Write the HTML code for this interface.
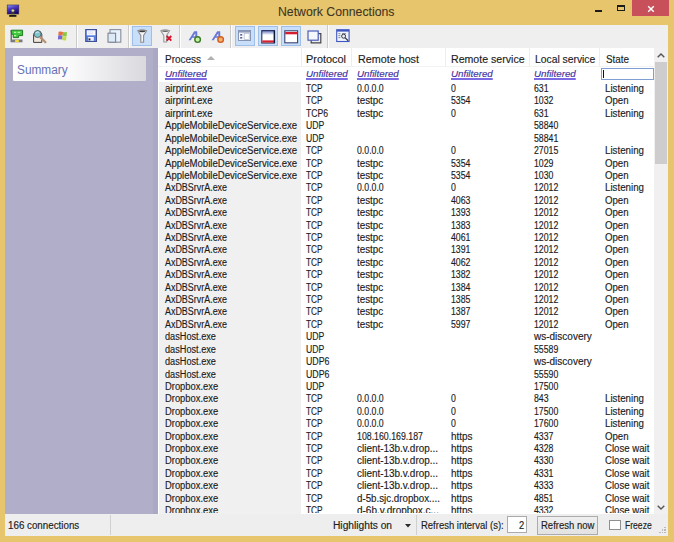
<!DOCTYPE html>
<html><head><meta charset="utf-8"><title>Network Connections</title><style>
*{margin:0;padding:0;box-sizing:border-box}
html,body{width:674px;height:542px;overflow:hidden;background:#E6C56C;font-family:"Liberation Sans",sans-serif;}
.a{position:absolute}
.t{position:absolute;white-space:nowrap;transform-origin:0 0;line-height:1;-webkit-text-stroke:0.15px currentColor}
.sep{position:absolute;top:24.5px;width:1px;height:23.5px;background:#CBCBCB;box-shadow:1px 0 0 #FDFDFD}
.btn{position:absolute;top:26px;width:20px;height:20px;background:#C9DEF8;border:1px solid #9DBFEA}
.ul{text-decoration:underline;text-decoration-thickness:1.7px;text-underline-offset:1.2px;text-decoration-color:#7C6AE4}
</style></head>
<body>
<svg class="a" style="left:6px;top:4px" width="14" height="14" viewBox="0 0 14 14">
<defs><linearGradient id="mon" x1="0" y1="0" x2="0.4" y2="1"><stop offset="0" stop-color="#9aa4ec"/><stop offset="0.45" stop-color="#4a38c4"/><stop offset="1" stop-color="#1c0868"/></linearGradient></defs>
<rect x="1.2" y="1" width="11.6" height="9" fill="url(#mon)" stroke="#2a2460" stroke-width="0.6"/>
<path d="M5 10.2Q5.2 7.6 6.9 7.4Q8.6 7.6 8.8 10.2Z" fill="#3a3a30"/>
<circle cx="6.9" cy="6.6" r="1.5" fill="#e2e89a" stroke="#4a4a3a" stroke-width="0.5"/>
<rect x="3.2" y="11" width="7.2" height="1.8" fill="#1a1a12"/>
</svg>
<div class="t " style="left:278.30px;top:5.40px;font-size:13px;color:#3E3622;transform:scaleX(0.942);-webkit-text-stroke:0.1px currentColor;">Network Connections</div>
<div class="a" style="left:595px;top:9.5px;width:7px;height:2px;background:#1b1b1b"></div>
<div class="a" style="left:617px;top:5px;width:8px;height:6px;border:1px solid #1b1b1b;border-top-width:2px"></div>
<div class="a" style="left:632px;top:0;width:37px;height:16px;background:#C7505A"></div>
<svg class="a" style="left:647px;top:5px" width="8" height="8" viewBox="0 0 8 8"><path d="M1.2 1.2L6.8 6.8M6.8 1.2L1.2 6.8" stroke="#fff" stroke-width="1.5"/></svg>
<div class="a" style="left:5px;top:24.5px;width:663px;height:23.5px;background:#EFEFEF"></div>
<div class="sep" style="left:76px"></div>
<div class="sep" style="left:127.5px"></div>
<div class="sep" style="left:178.5px"></div>
<div class="sep" style="left:229.5px"></div>
<div class="sep" style="left:327px"></div>
<div class="btn" style="left:132px"></div>
<div class="btn" style="left:235px"></div>
<div class="btn" style="left:258px"></div>
<div class="btn" style="left:281px"></div>
<svg class="a" style="left:9px;top:28px" width="16" height="16" viewBox="0 0 16 16">
<path d="M2.2 2v10" stroke="#4a4a4a" stroke-width="1.1"/>
<path d="M2.2 2.2H13.6V7.6H9.6V9.6H4.2V6.2H2.6Z" fill="#3fc83f" stroke="#207a20" stroke-width="1"/>
<path d="M5 4.4h2.2M8.6 4.4h2.6M5 7.6h2" stroke="#b8f5a0" stroke-width="1.2"/>
<rect x="1.5" y="11.5" width="12" height="2.8" fill="#7a7a80"/>
<ellipse cx="8" cy="13" rx="2.2" ry="1.2" fill="#f2d840"/>
</svg>
<svg class="a" style="left:32px;top:28px" width="15" height="16" viewBox="0 0 15 16">
<path d="M1.6 14.4V6.5A4.2 4.2 0 0 1 9.8 6.2V14.4Z" fill="#efe6dc" stroke="#3e3e3e" stroke-width="1"/>
<circle cx="5.6" cy="6" r="3.5" fill="#7cc6cc" stroke="#4c5c64" stroke-width="0.9"/>
<path d="M3.6 5.2Q5 3.4 7 4.2" stroke="#d8f2f2" stroke-width="0.9" fill="none"/>
<path d="M8.6 9.4L13.4 14.2" stroke="#b89070" stroke-width="2.2" stroke-linecap="round"/>
</svg>
<svg class="a" style="left:57px;top:31px" width="11" height="11" viewBox="0 0 11 11">
<path d="M1.6 0.8Q3.6 0.2 6 0.9L5.7 4.6Q3.6 4 1.3 4.5Z" fill="#e8703c"/>
<path d="M6 1Q8 1.6 10 1L9.6 5Q7.6 5.6 5.7 4.8Z" fill="#86c840"/>
<path d="M1.2 4.6Q3.4 4.1 5.6 4.7L5.3 8.5Q3.2 7.9 0.9 8.4Z" fill="#7468d6"/>
<path d="M5.6 5Q7.6 5.7 9.5 5.1L9.1 9.2Q7.2 9.8 5.2 9Z" fill="#c4de48"/>
</svg>
<svg class="a" style="left:84.5px;top:29px" width="12" height="13" viewBox="0 0 12 13">
<rect x="0.7" y="0.5" width="10.8" height="12" fill="#5a7ee0" stroke="#404e96" stroke-width="1"/>
<rect x="1.8" y="1.3" width="8.6" height="5" fill="#f6f8fc"/>
<path d="M3 3h5M3 4.6h5" stroke="#d6d8ee" stroke-width="0.7"/>
<rect x="3.2" y="8" width="5.6" height="3.8" fill="#eef2fb"/>
<rect x="3.6" y="9.4" width="1.8" height="2" fill="#1c2030"/>
</svg>
<svg class="a" style="left:106.5px;top:29px" width="15" height="14" viewBox="0 0 15 14">
<rect x="3" y="0.6" width="10.8" height="12.6" fill="#e8f2fc" stroke="#8a8e9c" stroke-width="1.1"/>
<rect x="1" y="4.2" width="7.6" height="9" fill="#dceaf8" stroke="#7e8290" stroke-width="1.1"/>
</svg>
<svg class="a" style="left:136.5px;top:29px" width="11" height="14" viewBox="0 0 11 14">
<path d="M0.8 1.8Q5.2 0 9.6 1.8L6.6 6.4V13.2H3.8V6.4Z" fill="#f6f6f8" stroke="#8c8c90" stroke-width="1.1"/>
<ellipse cx="5.2" cy="2.3" rx="3.2" ry="0.9" fill="#3a3a3a"/>
</svg>
<svg class="a" style="left:159.5px;top:29px" width="13" height="14" viewBox="0 0 13 14">
<path d="M0.8 1.8Q5.2 0 9.6 1.8L6.6 6.4V13H3.8V6.4Z" fill="#f0f0f0" stroke="#9a9a9c" stroke-width="1.1"/>
<ellipse cx="5.2" cy="2.3" rx="3.2" ry="0.8" fill="#666"/>
<path d="M6.7 7L11.3 11.6M11.3 7L6.7 11.6" stroke="#d8102a" stroke-width="1.9"/>
</svg>
<svg class="a" style="left:187.5px;top:30px" width="14" height="14" viewBox="0 0 14 14">
<path d="M0.6 10.2L6.2 1.2H9.2L9.4 10.2H7.4L7.3 7.8H4.2L2.8 10.2ZM5.2 6.2H7.3L7.3 3.2Z" fill="#6878d8"/>
<circle cx="9.6" cy="9.6" r="2.8" fill="#c8f0a0" stroke="#3c7a2a" stroke-width="1.4"/>
</svg>
<svg class="a" style="left:210.5px;top:30px" width="14" height="14" viewBox="0 0 14 14">
<path d="M0.6 10.2L6.2 1.2H9.2L9.4 10.2H7.4L7.3 7.8H4.2L2.8 10.2ZM5.2 6.2H7.3L7.3 3.2Z" fill="#6878d8"/>
<circle cx="9.6" cy="9.6" r="2.8" fill="#f6b070" stroke="#d06020" stroke-width="1.4"/>
</svg>
<svg class="a" style="left:237.5px;top:30px" width="13" height="11" viewBox="0 0 13 11">
<rect x="0.5" y="0.5" width="12" height="10" fill="#f6f8fc" stroke="#8894b4" stroke-width="1"/>
<rect x="1" y="1" width="11" height="1.6" fill="#8f9aba"/>
<rect x="2.2" y="4" width="2" height="1.6" fill="#5a6098"/><rect x="2.2" y="7" width="2" height="1.6" fill="#5a6098"/>
<rect x="6.2" y="3.4" width="5" height="6" fill="#fff" stroke="#b0b8cc" stroke-width="0.7"/>
</svg>
<svg class="a" style="left:260.5px;top:29.5px" width="15" height="14" viewBox="0 0 15 14">
<defs><linearGradient id="wg" x1="0" y1="0" x2="0" y2="1"><stop offset="0" stop-color="#6070c0"/><stop offset="0.35" stop-color="#ffffff"/><stop offset="1" stop-color="#ffffff"/></linearGradient></defs>
<rect x="0.8" y="0.6" width="12.6" height="12.4" fill="url(#wg)" stroke="#283060" stroke-width="1.1"/>
<rect x="1.3" y="10.4" width="11.6" height="2.1" fill="#d82030"/>
<path d="M13.4 0.6V13" stroke="#10183a" stroke-width="1.4"/>
</svg>
<svg class="a" style="left:283.5px;top:29.5px" width="15" height="14" viewBox="0 0 15 14">
<rect x="0.8" y="0.8" width="12.8" height="12" fill="#fff" stroke="#3a4270" stroke-width="1.1"/>
<rect x="1.2" y="2" width="12.4" height="2.3" fill="#d81c30"/>
</svg>
<svg class="a" style="left:306.5px;top:29.5px" width="15" height="14" viewBox="0 0 15 14">
<path d="M11.2 3.6H13.8V12.8H4.2V10.2" fill="none" stroke="#44464c" stroke-width="1.2"/>
<rect x="1" y="1" width="10.2" height="9.2" fill="#f4f8fe" stroke="#4a5cb8" stroke-width="1.2"/>
</svg>
<svg class="a" style="left:335.5px;top:29px" width="14" height="14" viewBox="0 0 14 14">
<rect x="0.7" y="0.7" width="12.4" height="11.8" fill="#eef4fc" stroke="#3f56c0" stroke-width="1.1"/>
<rect x="1" y="1" width="12" height="1.6" fill="#3f56c0"/>
<path d="M2.4 4.6h2M2.4 6.6h2M2.4 8.6h2M6 4.6h4" stroke="#7a8090" stroke-width="0.9"/>
<circle cx="7.6" cy="7.2" r="2" fill="#e8eef6" stroke="#3a3a44" stroke-width="1"/>
<path d="M9 8.6L12.2 11.8" stroke="#3a3a44" stroke-width="1.3"/>
</svg>

<div class="a" style="left:5px;top:48px;width:153px;height:466px;background:#B0AEC9"></div>
<div class="a" style="left:153px;top:48px;width:5px;height:466px;background:#AAA8C4"></div>
<div class="a" style="left:13px;top:56px;width:132.5px;height:24.6px;border-radius:1px;background:linear-gradient(90deg,#ffffff 0%,#f9f9fa 45%,#d9d9de 100%)"></div>
<div class="t " style="left:17.30px;top:63.74px;font-size:12px;color:#6670B4;transform:scaleX(0.986);-webkit-text-stroke:0;">Summary</div>
<div class="a" style="left:158px;top:48px;width:496px;height:466px;background:#ffffff"></div>
<div class="a" style="left:158px;top:65.5px;width:496px;height:1px;background:#F2F2F2"></div>
<div class="a" style="left:159px;top:81.8px;width:141.5px;height:432px;background:#F0F0F0"></div>
<div class="a" style="left:300.5px;top:48px;width:1px;height:17.5px;background:#EDEDED"></div>
<div class="a" style="left:351px;top:48px;width:1px;height:17.5px;background:#EDEDED"></div>
<div class="a" style="left:445px;top:48px;width:1px;height:17.5px;background:#EDEDED"></div>
<div class="a" style="left:529px;top:48px;width:1px;height:17.5px;background:#EDEDED"></div>
<div class="a" style="left:598.7px;top:48px;width:1px;height:17.5px;background:#EDEDED"></div>
<div class="t " style="left:165.40px;top:53.59px;font-size:11.0px;color:#1c1c1c;transform:scaleX(0.909);">Process</div>
<div class="t " style="left:306.30px;top:53.59px;font-size:11.0px;color:#1c1c1c;transform:scaleX(0.991);">Protocol</div>
<div class="t " style="left:357.60px;top:53.59px;font-size:11.0px;color:#1c1c1c;transform:scaleX(0.978);">Remote host</div>
<div class="t " style="left:451.10px;top:53.59px;font-size:11.0px;color:#1c1c1c;transform:scaleX(0.963);">Remote service</div>
<div class="t " style="left:534.60px;top:53.59px;font-size:11.0px;color:#1c1c1c;transform:scaleX(0.939);">Local service</div>
<div class="t " style="left:605.80px;top:53.59px;font-size:11.0px;color:#1c1c1c;transform:scaleX(0.899);">State</div>
<svg class="a" style="left:207px;top:56px" width="8" height="4" viewBox="0 0 8 4"><path d="M0 4L4 0L8 4Z" fill="#b0b0b0"/></svg>
<div class="t ul" style="left:164.80px;top:68.87px;font-size:9.6px;color:#3F309E;transform:scaleX(1.017);font-style:italic;">Unfiltered</div>
<div class="t ul" style="left:305.70px;top:68.87px;font-size:9.6px;color:#3F309E;transform:scaleX(1.017);font-style:italic;">Unfiltered</div>
<div class="t ul" style="left:357.00px;top:68.87px;font-size:9.6px;color:#3F309E;transform:scaleX(1.017);font-style:italic;">Unfiltered</div>
<div class="t ul" style="left:450.50px;top:68.87px;font-size:9.6px;color:#3F309E;transform:scaleX(1.017);font-style:italic;">Unfiltered</div>
<div class="t ul" style="left:534.00px;top:68.87px;font-size:9.6px;color:#3F309E;transform:scaleX(1.017);font-style:italic;">Unfiltered</div>
<div class="a" style="left:600.6px;top:67.7px;width:53px;height:12px;border:1px solid #7F9FD4;background:#fff"></div>
<div class="a" style="left:602.5px;top:69.5px;width:1px;height:8.5px;background:#111"></div>
<div class="a" style="left:158px;top:48px;width:496px;height:465px;overflow:hidden">
<div class="t " style="left:6.80px;top:36.03px;font-size:10.0px;color:#1c1c1c;transform:scaleX(0.960);">airprint.exe</div>
<div class="t " style="left:147.70px;top:36.03px;font-size:10.0px;color:#1c1c1c;transform:scaleX(0.830);">TCP</div>
<div class="t " style="left:199.00px;top:36.03px;font-size:10.0px;color:#1c1c1c;transform:scaleX(0.873);">0.0.0.0</div>
<div class="t " style="left:292.50px;top:36.03px;font-size:10.0px;color:#1c1c1c;transform:scaleX(0.876);">0</div>
<div class="t " style="left:376.00px;top:36.03px;font-size:10.0px;color:#1c1c1c;transform:scaleX(0.876);">631</div>
<div class="t " style="left:447.20px;top:36.03px;font-size:10.0px;color:#1c1c1c;transform:scaleX(0.974);">Listening</div>
<div class="t " style="left:6.80px;top:48.45px;font-size:10.0px;color:#1c1c1c;transform:scaleX(0.960);">airprint.exe</div>
<div class="t " style="left:147.70px;top:48.45px;font-size:10.0px;color:#1c1c1c;transform:scaleX(0.830);">TCP</div>
<div class="t " style="left:199.00px;top:48.45px;font-size:10.0px;color:#1c1c1c;transform:scaleX(0.982);">testpc</div>
<div class="t " style="left:292.50px;top:48.45px;font-size:10.0px;color:#1c1c1c;transform:scaleX(0.876);">5354</div>
<div class="t " style="left:376.00px;top:48.45px;font-size:10.0px;color:#1c1c1c;transform:scaleX(0.876);">1032</div>
<div class="t " style="left:447.20px;top:48.45px;font-size:10.0px;color:#1c1c1c;transform:scaleX(0.965);">Open</div>
<div class="t " style="left:6.80px;top:60.86px;font-size:10.0px;color:#1c1c1c;transform:scaleX(0.960);">airprint.exe</div>
<div class="t " style="left:147.70px;top:60.86px;font-size:10.0px;color:#1c1c1c;transform:scaleX(0.861);">TCP6</div>
<div class="t " style="left:199.00px;top:60.86px;font-size:10.0px;color:#1c1c1c;transform:scaleX(0.982);">testpc</div>
<div class="t " style="left:292.50px;top:60.86px;font-size:10.0px;color:#1c1c1c;transform:scaleX(0.876);">0</div>
<div class="t " style="left:376.00px;top:60.86px;font-size:10.0px;color:#1c1c1c;transform:scaleX(0.876);">631</div>
<div class="t " style="left:447.20px;top:60.86px;font-size:10.0px;color:#1c1c1c;transform:scaleX(0.974);">Listening</div>
<div class="t " style="left:6.80px;top:73.28px;font-size:10.0px;color:#1c1c1c;transform:scaleX(0.959);">AppleMobileDeviceService.exe</div>
<div class="t " style="left:147.70px;top:73.28px;font-size:10.0px;color:#1c1c1c;transform:scaleX(0.867);">UDP</div>
<div class="t " style="left:376.00px;top:73.28px;font-size:10.0px;color:#1c1c1c;transform:scaleX(0.876);">58840</div>
<div class="t " style="left:6.80px;top:85.69px;font-size:10.0px;color:#1c1c1c;transform:scaleX(0.959);">AppleMobileDeviceService.exe</div>
<div class="t " style="left:147.70px;top:85.69px;font-size:10.0px;color:#1c1c1c;transform:scaleX(0.867);">UDP</div>
<div class="t " style="left:376.00px;top:85.69px;font-size:10.0px;color:#1c1c1c;transform:scaleX(0.876);">58841</div>
<div class="t " style="left:6.80px;top:98.10px;font-size:10.0px;color:#1c1c1c;transform:scaleX(0.959);">AppleMobileDeviceService.exe</div>
<div class="t " style="left:147.70px;top:98.10px;font-size:10.0px;color:#1c1c1c;transform:scaleX(0.830);">TCP</div>
<div class="t " style="left:199.00px;top:98.10px;font-size:10.0px;color:#1c1c1c;transform:scaleX(0.873);">0.0.0.0</div>
<div class="t " style="left:292.50px;top:98.10px;font-size:10.0px;color:#1c1c1c;transform:scaleX(0.876);">0</div>
<div class="t " style="left:376.00px;top:98.10px;font-size:10.0px;color:#1c1c1c;transform:scaleX(0.876);">27015</div>
<div class="t " style="left:447.20px;top:98.10px;font-size:10.0px;color:#1c1c1c;transform:scaleX(0.974);">Listening</div>
<div class="t " style="left:6.80px;top:110.52px;font-size:10.0px;color:#1c1c1c;transform:scaleX(0.959);">AppleMobileDeviceService.exe</div>
<div class="t " style="left:147.70px;top:110.52px;font-size:10.0px;color:#1c1c1c;transform:scaleX(0.830);">TCP</div>
<div class="t " style="left:199.00px;top:110.52px;font-size:10.0px;color:#1c1c1c;transform:scaleX(0.982);">testpc</div>
<div class="t " style="left:292.50px;top:110.52px;font-size:10.0px;color:#1c1c1c;transform:scaleX(0.876);">5354</div>
<div class="t " style="left:376.00px;top:110.52px;font-size:10.0px;color:#1c1c1c;transform:scaleX(0.876);">1029</div>
<div class="t " style="left:447.20px;top:110.52px;font-size:10.0px;color:#1c1c1c;transform:scaleX(0.965);">Open</div>
<div class="t " style="left:6.80px;top:122.93px;font-size:10.0px;color:#1c1c1c;transform:scaleX(0.959);">AppleMobileDeviceService.exe</div>
<div class="t " style="left:147.70px;top:122.93px;font-size:10.0px;color:#1c1c1c;transform:scaleX(0.830);">TCP</div>
<div class="t " style="left:199.00px;top:122.93px;font-size:10.0px;color:#1c1c1c;transform:scaleX(0.982);">testpc</div>
<div class="t " style="left:292.50px;top:122.93px;font-size:10.0px;color:#1c1c1c;transform:scaleX(0.876);">5354</div>
<div class="t " style="left:376.00px;top:122.93px;font-size:10.0px;color:#1c1c1c;transform:scaleX(0.876);">1030</div>
<div class="t " style="left:447.20px;top:122.93px;font-size:10.0px;color:#1c1c1c;transform:scaleX(0.965);">Open</div>
<div class="t " style="left:6.80px;top:135.35px;font-size:10.0px;color:#1c1c1c;transform:scaleX(0.893);">AxDBSrvrA.exe</div>
<div class="t " style="left:147.70px;top:135.35px;font-size:10.0px;color:#1c1c1c;transform:scaleX(0.830);">TCP</div>
<div class="t " style="left:199.00px;top:135.35px;font-size:10.0px;color:#1c1c1c;transform:scaleX(0.873);">0.0.0.0</div>
<div class="t " style="left:292.50px;top:135.35px;font-size:10.0px;color:#1c1c1c;transform:scaleX(0.876);">0</div>
<div class="t " style="left:376.00px;top:135.35px;font-size:10.0px;color:#1c1c1c;transform:scaleX(0.876);">12012</div>
<div class="t " style="left:447.20px;top:135.35px;font-size:10.0px;color:#1c1c1c;transform:scaleX(0.974);">Listening</div>
<div class="t " style="left:6.80px;top:147.76px;font-size:10.0px;color:#1c1c1c;transform:scaleX(0.893);">AxDBSrvrA.exe</div>
<div class="t " style="left:147.70px;top:147.76px;font-size:10.0px;color:#1c1c1c;transform:scaleX(0.830);">TCP</div>
<div class="t " style="left:199.00px;top:147.76px;font-size:10.0px;color:#1c1c1c;transform:scaleX(0.982);">testpc</div>
<div class="t " style="left:292.50px;top:147.76px;font-size:10.0px;color:#1c1c1c;transform:scaleX(0.876);">4063</div>
<div class="t " style="left:376.00px;top:147.76px;font-size:10.0px;color:#1c1c1c;transform:scaleX(0.876);">12012</div>
<div class="t " style="left:447.20px;top:147.76px;font-size:10.0px;color:#1c1c1c;transform:scaleX(0.965);">Open</div>
<div class="t " style="left:6.80px;top:160.17px;font-size:10.0px;color:#1c1c1c;transform:scaleX(0.893);">AxDBSrvrA.exe</div>
<div class="t " style="left:147.70px;top:160.17px;font-size:10.0px;color:#1c1c1c;transform:scaleX(0.830);">TCP</div>
<div class="t " style="left:199.00px;top:160.17px;font-size:10.0px;color:#1c1c1c;transform:scaleX(0.982);">testpc</div>
<div class="t " style="left:292.50px;top:160.17px;font-size:10.0px;color:#1c1c1c;transform:scaleX(0.876);">1393</div>
<div class="t " style="left:376.00px;top:160.17px;font-size:10.0px;color:#1c1c1c;transform:scaleX(0.876);">12012</div>
<div class="t " style="left:447.20px;top:160.17px;font-size:10.0px;color:#1c1c1c;transform:scaleX(0.965);">Open</div>
<div class="t " style="left:6.80px;top:172.59px;font-size:10.0px;color:#1c1c1c;transform:scaleX(0.893);">AxDBSrvrA.exe</div>
<div class="t " style="left:147.70px;top:172.59px;font-size:10.0px;color:#1c1c1c;transform:scaleX(0.830);">TCP</div>
<div class="t " style="left:199.00px;top:172.59px;font-size:10.0px;color:#1c1c1c;transform:scaleX(0.982);">testpc</div>
<div class="t " style="left:292.50px;top:172.59px;font-size:10.0px;color:#1c1c1c;transform:scaleX(0.876);">1383</div>
<div class="t " style="left:376.00px;top:172.59px;font-size:10.0px;color:#1c1c1c;transform:scaleX(0.876);">12012</div>
<div class="t " style="left:447.20px;top:172.59px;font-size:10.0px;color:#1c1c1c;transform:scaleX(0.965);">Open</div>
<div class="t " style="left:6.80px;top:185.00px;font-size:10.0px;color:#1c1c1c;transform:scaleX(0.893);">AxDBSrvrA.exe</div>
<div class="t " style="left:147.70px;top:185.00px;font-size:10.0px;color:#1c1c1c;transform:scaleX(0.830);">TCP</div>
<div class="t " style="left:199.00px;top:185.00px;font-size:10.0px;color:#1c1c1c;transform:scaleX(0.982);">testpc</div>
<div class="t " style="left:292.50px;top:185.00px;font-size:10.0px;color:#1c1c1c;transform:scaleX(0.876);">4061</div>
<div class="t " style="left:376.00px;top:185.00px;font-size:10.0px;color:#1c1c1c;transform:scaleX(0.876);">12012</div>
<div class="t " style="left:447.20px;top:185.00px;font-size:10.0px;color:#1c1c1c;transform:scaleX(0.965);">Open</div>
<div class="t " style="left:6.80px;top:197.42px;font-size:10.0px;color:#1c1c1c;transform:scaleX(0.893);">AxDBSrvrA.exe</div>
<div class="t " style="left:147.70px;top:197.42px;font-size:10.0px;color:#1c1c1c;transform:scaleX(0.830);">TCP</div>
<div class="t " style="left:199.00px;top:197.42px;font-size:10.0px;color:#1c1c1c;transform:scaleX(0.982);">testpc</div>
<div class="t " style="left:292.50px;top:197.42px;font-size:10.0px;color:#1c1c1c;transform:scaleX(0.876);">1391</div>
<div class="t " style="left:376.00px;top:197.42px;font-size:10.0px;color:#1c1c1c;transform:scaleX(0.876);">12012</div>
<div class="t " style="left:447.20px;top:197.42px;font-size:10.0px;color:#1c1c1c;transform:scaleX(0.965);">Open</div>
<div class="t " style="left:6.80px;top:209.83px;font-size:10.0px;color:#1c1c1c;transform:scaleX(0.893);">AxDBSrvrA.exe</div>
<div class="t " style="left:147.70px;top:209.83px;font-size:10.0px;color:#1c1c1c;transform:scaleX(0.830);">TCP</div>
<div class="t " style="left:199.00px;top:209.83px;font-size:10.0px;color:#1c1c1c;transform:scaleX(0.982);">testpc</div>
<div class="t " style="left:292.50px;top:209.83px;font-size:10.0px;color:#1c1c1c;transform:scaleX(0.876);">4062</div>
<div class="t " style="left:376.00px;top:209.83px;font-size:10.0px;color:#1c1c1c;transform:scaleX(0.876);">12012</div>
<div class="t " style="left:447.20px;top:209.83px;font-size:10.0px;color:#1c1c1c;transform:scaleX(0.965);">Open</div>
<div class="t " style="left:6.80px;top:222.25px;font-size:10.0px;color:#1c1c1c;transform:scaleX(0.893);">AxDBSrvrA.exe</div>
<div class="t " style="left:147.70px;top:222.25px;font-size:10.0px;color:#1c1c1c;transform:scaleX(0.830);">TCP</div>
<div class="t " style="left:199.00px;top:222.25px;font-size:10.0px;color:#1c1c1c;transform:scaleX(0.982);">testpc</div>
<div class="t " style="left:292.50px;top:222.25px;font-size:10.0px;color:#1c1c1c;transform:scaleX(0.876);">1382</div>
<div class="t " style="left:376.00px;top:222.25px;font-size:10.0px;color:#1c1c1c;transform:scaleX(0.876);">12012</div>
<div class="t " style="left:447.20px;top:222.25px;font-size:10.0px;color:#1c1c1c;transform:scaleX(0.965);">Open</div>
<div class="t " style="left:6.80px;top:234.66px;font-size:10.0px;color:#1c1c1c;transform:scaleX(0.893);">AxDBSrvrA.exe</div>
<div class="t " style="left:147.70px;top:234.66px;font-size:10.0px;color:#1c1c1c;transform:scaleX(0.830);">TCP</div>
<div class="t " style="left:199.00px;top:234.66px;font-size:10.0px;color:#1c1c1c;transform:scaleX(0.982);">testpc</div>
<div class="t " style="left:292.50px;top:234.66px;font-size:10.0px;color:#1c1c1c;transform:scaleX(0.876);">1384</div>
<div class="t " style="left:376.00px;top:234.66px;font-size:10.0px;color:#1c1c1c;transform:scaleX(0.876);">12012</div>
<div class="t " style="left:447.20px;top:234.66px;font-size:10.0px;color:#1c1c1c;transform:scaleX(0.965);">Open</div>
<div class="t " style="left:6.80px;top:247.07px;font-size:10.0px;color:#1c1c1c;transform:scaleX(0.893);">AxDBSrvrA.exe</div>
<div class="t " style="left:147.70px;top:247.07px;font-size:10.0px;color:#1c1c1c;transform:scaleX(0.830);">TCP</div>
<div class="t " style="left:199.00px;top:247.07px;font-size:10.0px;color:#1c1c1c;transform:scaleX(0.982);">testpc</div>
<div class="t " style="left:292.50px;top:247.07px;font-size:10.0px;color:#1c1c1c;transform:scaleX(0.876);">1385</div>
<div class="t " style="left:376.00px;top:247.07px;font-size:10.0px;color:#1c1c1c;transform:scaleX(0.876);">12012</div>
<div class="t " style="left:447.20px;top:247.07px;font-size:10.0px;color:#1c1c1c;transform:scaleX(0.965);">Open</div>
<div class="t " style="left:6.80px;top:259.49px;font-size:10.0px;color:#1c1c1c;transform:scaleX(0.893);">AxDBSrvrA.exe</div>
<div class="t " style="left:147.70px;top:259.49px;font-size:10.0px;color:#1c1c1c;transform:scaleX(0.830);">TCP</div>
<div class="t " style="left:199.00px;top:259.49px;font-size:10.0px;color:#1c1c1c;transform:scaleX(0.982);">testpc</div>
<div class="t " style="left:292.50px;top:259.49px;font-size:10.0px;color:#1c1c1c;transform:scaleX(0.876);">1387</div>
<div class="t " style="left:376.00px;top:259.49px;font-size:10.0px;color:#1c1c1c;transform:scaleX(0.876);">12012</div>
<div class="t " style="left:447.20px;top:259.49px;font-size:10.0px;color:#1c1c1c;transform:scaleX(0.965);">Open</div>
<div class="t " style="left:6.80px;top:271.90px;font-size:10.0px;color:#1c1c1c;transform:scaleX(0.893);">AxDBSrvrA.exe</div>
<div class="t " style="left:147.70px;top:271.90px;font-size:10.0px;color:#1c1c1c;transform:scaleX(0.830);">TCP</div>
<div class="t " style="left:199.00px;top:271.90px;font-size:10.0px;color:#1c1c1c;transform:scaleX(0.982);">testpc</div>
<div class="t " style="left:292.50px;top:271.90px;font-size:10.0px;color:#1c1c1c;transform:scaleX(0.876);">5997</div>
<div class="t " style="left:376.00px;top:271.90px;font-size:10.0px;color:#1c1c1c;transform:scaleX(0.876);">12012</div>
<div class="t " style="left:447.20px;top:271.90px;font-size:10.0px;color:#1c1c1c;transform:scaleX(0.965);">Open</div>
<div class="t " style="left:6.80px;top:284.31px;font-size:10.0px;color:#1c1c1c;transform:scaleX(0.917);">dasHost.exe</div>
<div class="t " style="left:147.70px;top:284.31px;font-size:10.0px;color:#1c1c1c;transform:scaleX(0.867);">UDP</div>
<div class="t " style="left:376.00px;top:284.31px;font-size:10.0px;color:#1c1c1c;">ws-discovery</div>
<div class="t " style="left:6.80px;top:296.73px;font-size:10.0px;color:#1c1c1c;transform:scaleX(0.917);">dasHost.exe</div>
<div class="t " style="left:147.70px;top:296.73px;font-size:10.0px;color:#1c1c1c;transform:scaleX(0.867);">UDP</div>
<div class="t " style="left:376.00px;top:296.73px;font-size:10.0px;color:#1c1c1c;transform:scaleX(0.876);">55589</div>
<div class="t " style="left:6.80px;top:309.14px;font-size:10.0px;color:#1c1c1c;transform:scaleX(0.917);">dasHost.exe</div>
<div class="t " style="left:147.70px;top:309.14px;font-size:10.0px;color:#1c1c1c;transform:scaleX(0.881);">UDP6</div>
<div class="t " style="left:376.00px;top:309.14px;font-size:10.0px;color:#1c1c1c;">ws-discovery</div>
<div class="t " style="left:6.80px;top:321.56px;font-size:10.0px;color:#1c1c1c;transform:scaleX(0.917);">dasHost.exe</div>
<div class="t " style="left:147.70px;top:321.56px;font-size:10.0px;color:#1c1c1c;transform:scaleX(0.881);">UDP6</div>
<div class="t " style="left:376.00px;top:321.56px;font-size:10.0px;color:#1c1c1c;transform:scaleX(0.876);">55590</div>
<div class="t " style="left:6.80px;top:333.97px;font-size:10.0px;color:#1c1c1c;transform:scaleX(0.938);">Dropbox.exe</div>
<div class="t " style="left:147.70px;top:333.97px;font-size:10.0px;color:#1c1c1c;transform:scaleX(0.867);">UDP</div>
<div class="t " style="left:376.00px;top:333.97px;font-size:10.0px;color:#1c1c1c;transform:scaleX(0.876);">17500</div>
<div class="t " style="left:6.80px;top:346.38px;font-size:10.0px;color:#1c1c1c;transform:scaleX(0.938);">Dropbox.exe</div>
<div class="t " style="left:147.70px;top:346.38px;font-size:10.0px;color:#1c1c1c;transform:scaleX(0.830);">TCP</div>
<div class="t " style="left:199.00px;top:346.38px;font-size:10.0px;color:#1c1c1c;transform:scaleX(0.873);">0.0.0.0</div>
<div class="t " style="left:292.50px;top:346.38px;font-size:10.0px;color:#1c1c1c;transform:scaleX(0.876);">0</div>
<div class="t " style="left:376.00px;top:346.38px;font-size:10.0px;color:#1c1c1c;transform:scaleX(0.876);">843</div>
<div class="t " style="left:447.20px;top:346.38px;font-size:10.0px;color:#1c1c1c;transform:scaleX(0.974);">Listening</div>
<div class="t " style="left:6.80px;top:358.80px;font-size:10.0px;color:#1c1c1c;transform:scaleX(0.938);">Dropbox.exe</div>
<div class="t " style="left:147.70px;top:358.80px;font-size:10.0px;color:#1c1c1c;transform:scaleX(0.830);">TCP</div>
<div class="t " style="left:199.00px;top:358.80px;font-size:10.0px;color:#1c1c1c;transform:scaleX(0.873);">0.0.0.0</div>
<div class="t " style="left:292.50px;top:358.80px;font-size:10.0px;color:#1c1c1c;transform:scaleX(0.876);">0</div>
<div class="t " style="left:376.00px;top:358.80px;font-size:10.0px;color:#1c1c1c;transform:scaleX(0.876);">17500</div>
<div class="t " style="left:447.20px;top:358.80px;font-size:10.0px;color:#1c1c1c;transform:scaleX(0.974);">Listening</div>
<div class="t " style="left:6.80px;top:371.21px;font-size:10.0px;color:#1c1c1c;transform:scaleX(0.938);">Dropbox.exe</div>
<div class="t " style="left:147.70px;top:371.21px;font-size:10.0px;color:#1c1c1c;transform:scaleX(0.830);">TCP</div>
<div class="t " style="left:199.00px;top:371.21px;font-size:10.0px;color:#1c1c1c;transform:scaleX(0.873);">0.0.0.0</div>
<div class="t " style="left:292.50px;top:371.21px;font-size:10.0px;color:#1c1c1c;transform:scaleX(0.876);">0</div>
<div class="t " style="left:376.00px;top:371.21px;font-size:10.0px;color:#1c1c1c;transform:scaleX(0.876);">17600</div>
<div class="t " style="left:447.20px;top:371.21px;font-size:10.0px;color:#1c1c1c;transform:scaleX(0.974);">Listening</div>
<div class="t " style="left:6.80px;top:383.63px;font-size:10.0px;color:#1c1c1c;transform:scaleX(0.938);">Dropbox.exe</div>
<div class="t " style="left:147.70px;top:383.63px;font-size:10.0px;color:#1c1c1c;transform:scaleX(0.830);">TCP</div>
<div class="t " style="left:199.00px;top:383.63px;font-size:10.0px;color:#1c1c1c;transform:scaleX(0.878);">108.160.169.187</div>
<div class="t " style="left:292.50px;top:383.63px;font-size:10.0px;color:#1c1c1c;transform:scaleX(0.996);">https</div>
<div class="t " style="left:376.00px;top:383.63px;font-size:10.0px;color:#1c1c1c;transform:scaleX(0.876);">4337</div>
<div class="t " style="left:447.20px;top:383.63px;font-size:10.0px;color:#1c1c1c;transform:scaleX(0.965);">Open</div>
<div class="t " style="left:6.80px;top:396.04px;font-size:10.0px;color:#1c1c1c;transform:scaleX(0.938);">Dropbox.exe</div>
<div class="t " style="left:147.70px;top:396.04px;font-size:10.0px;color:#1c1c1c;transform:scaleX(0.830);">TCP</div>
<div class="t " style="left:199.00px;top:396.04px;font-size:10.0px;color:#1c1c1c;transform:scaleX(0.994);">client-13b.v.drop...</div>
<div class="t " style="left:292.50px;top:396.04px;font-size:10.0px;color:#1c1c1c;transform:scaleX(0.996);">https</div>
<div class="t " style="left:376.00px;top:396.04px;font-size:10.0px;color:#1c1c1c;transform:scaleX(0.876);">4328</div>
<div class="t " style="left:447.20px;top:396.04px;font-size:10.0px;color:#1c1c1c;transform:scaleX(0.963);">Close wait</div>
<div class="t " style="left:6.80px;top:408.46px;font-size:10.0px;color:#1c1c1c;transform:scaleX(0.938);">Dropbox.exe</div>
<div class="t " style="left:147.70px;top:408.46px;font-size:10.0px;color:#1c1c1c;transform:scaleX(0.830);">TCP</div>
<div class="t " style="left:199.00px;top:408.46px;font-size:10.0px;color:#1c1c1c;transform:scaleX(0.994);">client-13b.v.drop...</div>
<div class="t " style="left:292.50px;top:408.46px;font-size:10.0px;color:#1c1c1c;transform:scaleX(0.996);">https</div>
<div class="t " style="left:376.00px;top:408.46px;font-size:10.0px;color:#1c1c1c;transform:scaleX(0.876);">4330</div>
<div class="t " style="left:447.20px;top:408.46px;font-size:10.0px;color:#1c1c1c;transform:scaleX(0.963);">Close wait</div>
<div class="t " style="left:6.80px;top:420.87px;font-size:10.0px;color:#1c1c1c;transform:scaleX(0.938);">Dropbox.exe</div>
<div class="t " style="left:147.70px;top:420.87px;font-size:10.0px;color:#1c1c1c;transform:scaleX(0.830);">TCP</div>
<div class="t " style="left:199.00px;top:420.87px;font-size:10.0px;color:#1c1c1c;transform:scaleX(0.994);">client-13b.v.drop...</div>
<div class="t " style="left:292.50px;top:420.87px;font-size:10.0px;color:#1c1c1c;transform:scaleX(0.996);">https</div>
<div class="t " style="left:376.00px;top:420.87px;font-size:10.0px;color:#1c1c1c;transform:scaleX(0.876);">4331</div>
<div class="t " style="left:447.20px;top:420.87px;font-size:10.0px;color:#1c1c1c;transform:scaleX(0.963);">Close wait</div>
<div class="t " style="left:6.80px;top:433.28px;font-size:10.0px;color:#1c1c1c;transform:scaleX(0.938);">Dropbox.exe</div>
<div class="t " style="left:147.70px;top:433.28px;font-size:10.0px;color:#1c1c1c;transform:scaleX(0.830);">TCP</div>
<div class="t " style="left:199.00px;top:433.28px;font-size:10.0px;color:#1c1c1c;transform:scaleX(0.994);">client-13b.v.drop...</div>
<div class="t " style="left:292.50px;top:433.28px;font-size:10.0px;color:#1c1c1c;transform:scaleX(0.996);">https</div>
<div class="t " style="left:376.00px;top:433.28px;font-size:10.0px;color:#1c1c1c;transform:scaleX(0.876);">4333</div>
<div class="t " style="left:447.20px;top:433.28px;font-size:10.0px;color:#1c1c1c;transform:scaleX(0.963);">Close wait</div>
<div class="t " style="left:6.80px;top:445.70px;font-size:10.0px;color:#1c1c1c;transform:scaleX(0.938);">Dropbox.exe</div>
<div class="t " style="left:147.70px;top:445.70px;font-size:10.0px;color:#1c1c1c;transform:scaleX(0.830);">TCP</div>
<div class="t " style="left:199.00px;top:445.70px;font-size:10.0px;color:#1c1c1c;transform:scaleX(0.975);">d-5b.sjc.dropbox....</div>
<div class="t " style="left:292.50px;top:445.70px;font-size:10.0px;color:#1c1c1c;transform:scaleX(0.996);">https</div>
<div class="t " style="left:376.00px;top:445.70px;font-size:10.0px;color:#1c1c1c;transform:scaleX(0.876);">4851</div>
<div class="t " style="left:447.20px;top:445.70px;font-size:10.0px;color:#1c1c1c;transform:scaleX(0.963);">Close wait</div>
<div class="t " style="left:6.80px;top:458.11px;font-size:10.0px;color:#1c1c1c;transform:scaleX(0.938);">Dropbox.exe</div>
<div class="t " style="left:147.70px;top:458.11px;font-size:10.0px;color:#1c1c1c;transform:scaleX(0.830);">TCP</div>
<div class="t " style="left:199.00px;top:458.11px;font-size:10.0px;color:#1c1c1c;transform:scaleX(0.998);">d-6b.v.dropbox.c...</div>
<div class="t " style="left:292.50px;top:458.11px;font-size:10.0px;color:#1c1c1c;transform:scaleX(0.996);">https</div>
<div class="t " style="left:376.00px;top:458.11px;font-size:10.0px;color:#1c1c1c;transform:scaleX(0.876);">4332</div>
<div class="t " style="left:447.20px;top:458.11px;font-size:10.0px;color:#1c1c1c;transform:scaleX(0.963);">Close wait</div>
</div>
<div class="a" style="left:654px;top:48px;width:14px;height:466px;background:#F0F0F0"></div>
<div class="a" style="left:655px;top:62px;width:12px;height:101.6px;background:#CDCDCD"></div>
<svg class="a" style="left:657px;top:53px" width="8" height="5" viewBox="0 0 8 5"><path d="M0.7 4.3L4 1L7.3 4.3" fill="none" stroke="#555" stroke-width="1.4"/></svg>
<svg class="a" style="left:657px;top:504.5px" width="8" height="5" viewBox="0 0 8 5"><path d="M0.7 0.7L4 4L7.3 0.7" fill="none" stroke="#555" stroke-width="1.4"/></svg>
<div class="a" style="left:5px;top:513.7px;width:663px;height:22px;background:#EEEEEE"></div>
<div class="a" style="left:109.5px;top:515px;width:1px;height:19.5px;background:#d0d0d0"></div>
<div class="a" style="left:416px;top:515px;width:1px;height:19.5px;background:#d0d0d0"></div>
<div class="t " style="left:7.50px;top:521.03px;font-size:10px;color:#1c1c1c;transform:scaleX(0.978);">166 connections</div>
<div class="t " style="left:333.40px;top:521.03px;font-size:10px;color:#1c1c1c;transform:scaleX(1.021);">Highlights on</div>
<svg class="a" style="left:405px;top:523.5px" width="6" height="4" viewBox="0 0 6 4"><path d="M0 0H6L3 3.5Z" fill="#2a2a2a"/></svg>
<div class="t " style="left:421.30px;top:521.03px;font-size:10px;color:#1c1c1c;transform:scaleX(0.948);">Refresh interval (s):</div>
<div class="a" style="left:507.4px;top:516.4px;width:19.2px;height:17px;background:#fff;border:1px solid #ABABAB"></div>
<div class="t " style="left:518.80px;top:521.03px;font-size:10px;color:#1c1c1c;transform:scaleX(0.935);">2</div>
<div class="a" style="left:537px;top:515.7px;width:61px;height:19px;background:linear-gradient(#EFEFEF,#E2E2E2);border:1px solid #ACACAC"></div>
<div class="t " style="left:540.80px;top:521.03px;font-size:10px;color:#1c1c1c;transform:scaleX(0.951);">Refresh now</div>
<div class="a" style="left:609.3px;top:520.1px;width:11.5px;height:10.4px;background:#fff;border:1px solid #8f8f8f"></div>
<div class="t " style="left:625.00px;top:521.03px;font-size:10px;color:#1c1c1c;transform:scaleX(0.858);">Freeze</div>
<div class="a" style="left:664px;top:529px;width:1.5px;height:1.5px;background:#B8B8C0"></div>
<div class="a" style="left:664px;top:531.5px;width:1.5px;height:1.5px;background:#B8B8C0"></div>
<div class="a" style="left:661.5px;top:531.5px;width:1.5px;height:1.5px;background:#B8B8C0"></div>
<div class="a" style="left:664px;top:526.5px;width:1.5px;height:1.5px;background:#B8B8C0"></div>
<div class="a" style="left:661.5px;top:529px;width:1.5px;height:1.5px;background:#B8B8C0"></div>
<div class="a" style="left:659px;top:531.5px;width:1.5px;height:1.5px;background:#B8B8C0"></div>
</body></html>
